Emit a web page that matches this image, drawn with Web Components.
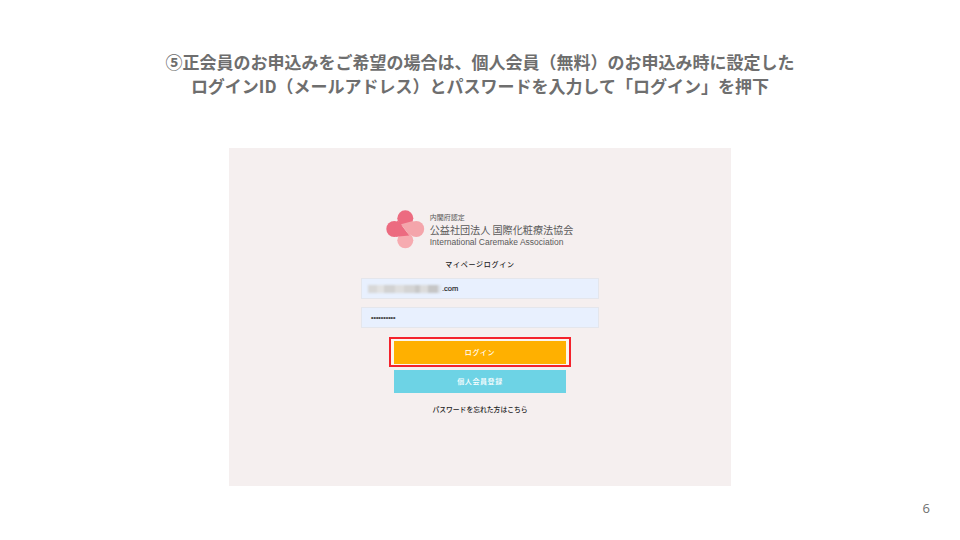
<!DOCTYPE html>
<html lang="ja">
<head>
<meta charset="utf-8">
<title>ログイン手順</title>
<style>
  html, body { margin: 0; padding: 0; background: #fff; }
</style>
</head>
<body>
<guide-slide page="6">
  <span slot="title">⑤正会員のお申込みをご希望の場合は、個人会員（無料）のお申込み時に設定した<br>ログインID（メールアドレス）とパスワードを入力して「ログイン」を押下</span>
  <login-panel></login-panel>
</guide-slide>

<script>
const JP = '"Noto Sans CJK JP", "Noto Sans", sans-serif';

// Slide frame: heading, screenshot area and page number
class GuideSlide extends HTMLElement {
  constructor() {
    super();
    this.attachShadow({ mode: "open" });
    this.shadowRoot.innerHTML = `
      <style>
        :host { display: flex; flex-direction: column; width: 960px; height: 540px; overflow: hidden; background: #fff; font-family: ${JP}; }
        .title { height: 48px; margin: 50px 0 50px; text-align: center; font-size: 17px; line-height: 24px; font-weight: 700; color: #6e6e6e; white-space: nowrap; }
        .body { display: flex; justify-content: center; }
        .foot { display: flex; justify-content: flex-end; padding: 13px 30px 0 0; font: 13px/18px "Open Sans", sans-serif; color: #6e6e6e; }
      </style>
      <div class="title"><slot name="title"></slot></div>
      <div class="body"><slot></slot></div>
      <div class="foot">${this.getAttribute("page") || ""}</div>
    `;
  }
}

// Association logo mark plus its three lines of text
class CareLogo extends HTMLElement {
  constructor() {
    super();
    this.attachShadow({ mode: "open" });
    this.shadowRoot.innerHTML = `
      <style>
        :host { display: flex; align-items: center; gap: 4px; height: 40px; color: #5a5a5a; }
        svg { display: block; width: 39px; height: 40px; flex: none; overflow: visible; }
        .text { display: flex; flex-direction: column; }
        .sub { font: 7px/11px ${JP}; }
        .name { font: 10.1px/14px ${JP}; white-space: nowrap; }
        .en { font: 8.5px/11px "Liberation Sans", sans-serif; white-space: nowrap; }
      </style>
      <svg viewBox="0 0 39 40">
        <circle cx="29.200" cy="19" r="8" fill="#f4a5ab"/>
        <circle cx="18.300" cy="30.300" r="8" fill="#f6abb0"/>
        <circle cx="18.300" cy="8.300" r="8" fill="#ec6b80"/>
        <circle cx="7.300" cy="19" r="8" fill="#ec6b80"/>
        <path d="M10.500 10.500 L14 14.300 L22.300 25.600 L9 26.800 L7.300 19 Z" fill="#ec6b80"/>
        <path d="M14 14.300 L26 11 L29.200 19 L22.300 25.600 Z" fill="#f4a5ab"/>
      </svg>
      <div class="text">
        <div class="sub">内閣府認定</div>
        <div class="name">公益社団法人 国際化粧療法協会</div>
        <div class="en">International Caremake Association</div>
      </div>
    `;
  }
}

// Pale blue filled input; the blurred block stands in for the hidden address
class LoginField extends HTMLElement {
  constructor() {
    super();
    this.attachShadow({ mode: "open" });
    this.shadowRoot.innerHTML = `
      <style>
        :host { display: flex; align-items: center; box-sizing: border-box; width: 238px; height: 21px; padding-left: 6px; background: #e8f0fe; border: 1px solid #e4e6ec; font: 7.5px/1 "Liberation Sans", sans-serif; color: #222; -webkit-text-stroke: .15px #222; }
        .mask { width: 73px; height: 8px; margin-right: 1px; filter: blur(.8px); background: linear-gradient(90deg, #d8d8d8 0 9px, #e2e2e2 9px 16px, #d2d2d2 16px 27px, #dedede 27px 36px, #d4d4d4 36px 47px, #c8c8c8 47px 52px, #dcdcdc 52px 60px, #c6c6c6 60px 70px, #dde2ea 70px); }
      </style>
      <span class="mask" part="mask"></span><slot></slot>
    `;
    if (!this.hasAttribute("masked")) this.shadowRoot.querySelector(".mask").style.display = "none";
  }
}

class LoginButton extends HTMLElement {
  static get observedAttributes() { return ["color"]; }
  constructor() {
    super();
    this.attachShadow({ mode: "open" });
    this.shadowRoot.innerHTML = `
      <style>
        :host { display: flex; align-items: center; justify-content: center; width: 172px; height: 23px; font: 500 7px/1 ${JP}; letter-spacing: .6px; color: #fff; background: var(--btn, #ffb000); }
      </style>
      <slot></slot>
    `;
  }
  attributeChangedCallback(name, oldValue, newValue) {
    this.style.setProperty("--btn", newValue);
  }
}

// The login screen shown in the slide
class LoginPanel extends HTMLElement {
  constructor() {
    super();
    this.attachShadow({ mode: "open" });
    this.shadowRoot.innerHTML = `
      <style>
        :host { display: flex; flex-direction: column; align-items: center; box-sizing: border-box; width: 502px; height: 338px; padding-top: 62px; background: #f5efef; font-family: ${JP}; color: #222; }
        .heading { margin-top: 8px; height: 12px; font: 500 7px/12px ${JP}; letter-spacing: .75px; }
        .fields { display: flex; flex-direction: column; gap: 8px; margin-top: 8px; }
        .dots { margin-left: 3px; letter-spacing: 0; font-size: 7px; color: #444; }
        .mark { box-sizing: border-box; display: flex; margin-top: 9px; padding: 2px 3px 1px; border: 2px solid #f4222c; background: #fbf6ee; }
        .second { margin-top: 3px; }
        .forgot { margin-top: 11px; font: 500 6.8px/10px ${JP}; }
      </style>
      <care-logo></care-logo>
      <div class="heading">マイページログイン</div>
      <div class="fields">
        <login-field masked>.com</login-field>
        <login-field><span class="dots">••••••••••</span></login-field>
      </div>
      <div class="mark"><login-button color="#ffb000">ログイン</login-button></div>
      <login-button class="second" color="#6dd3e5">個人会員登録</login-button>
      <div class="forgot">パスワードを忘れた方はこちら</div>
    `;
  }
}

customElements.define("guide-slide", GuideSlide);
customElements.define("care-logo", CareLogo);
customElements.define("login-field", LoginField);
customElements.define("login-button", LoginButton);
customElements.define("login-panel", LoginPanel);
</script>
</body>
</html>
